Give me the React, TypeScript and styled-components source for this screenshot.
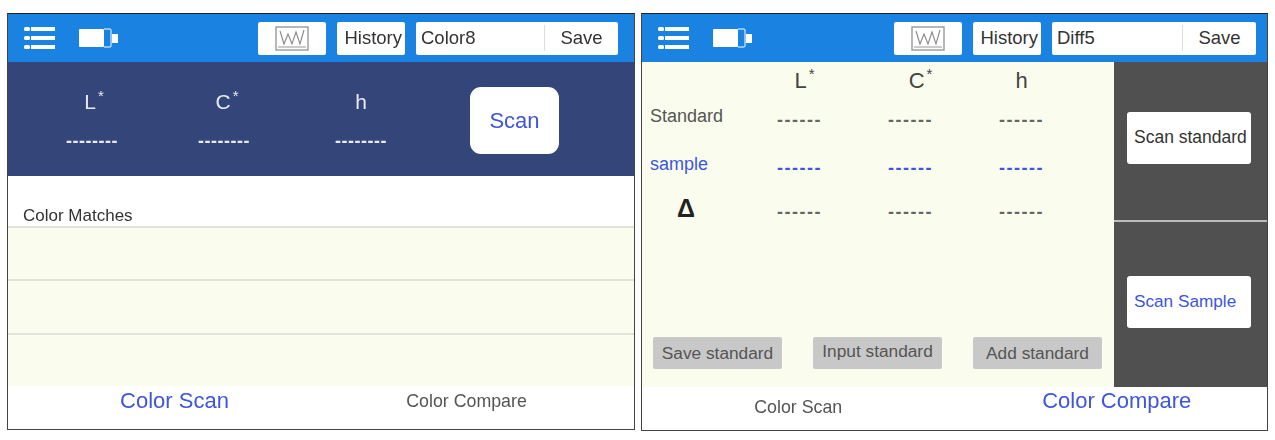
import React from "react";
import styled, { createGlobalStyle } from "styled-components";

const GlobalStyle = createGlobalStyle`
  html, body {
    margin: 0;
    background: #fff;
    font-family: "Liberation Sans", Arial, sans-serif;
  }
`;

const colors = {
  blue: "#1a82e0",
  navy: "#34457a",
  cream: "#fafdee",
  dark: "#505050",
  link: "#3d55e0",
  text: "#444",
};

const Page = styled.div`
  width: 1275px;
  height: 440px;
  box-sizing: border-box;
  padding: 13px 7px 0 7px;
  display: flex;
  gap: 6px;
  filter: blur(0.55px);
`;

const Phone = styled.div<{ $width: number; $height: number }>`
  width: ${(p) => p.$width}px;
  height: ${(p) => p.$height}px;
  box-sizing: border-box;
  border: 1px solid #444;
  border-top-color: #222;
  display: flex;
  flex-direction: column;
  background: #fff;
`;

const Header = styled.header<{ $padRight: number }>`
  height: 48px;
  flex: none;
  background: ${colors.blue};
  display: flex;
  align-items: center;
  padding: 0 ${(p) => p.$padRight}px 0 16px;
`;

const MenuIcon = styled.svg`
  width: 32px;
  height: 24px;
  margin-right: 23px;
`;

const BatteryIcon = styled.svg`
  width: 42px;
  height: 22px;
`;

const HeaderRight = styled.div`
  margin-left: auto;
  display: flex;
  gap: 11px;
`;

const HeaderButton = styled.div`
  width: 68px;
  height: 33px;
  box-sizing: border-box;
  background: #fff;
  border-radius: 2px;
  display: flex;
  align-items: center;
  justify-content: center;
  font-size: 18.5px;
  color: #333;
`;

const HistoryButton = styled(HeaderButton)`
  justify-content: flex-end;
  padding-right: 3px;
`;

const NameField = styled.div<{ $width: number }>`
  width: ${(p) => p.$width}px;
  height: 33px;
  background: #fff;
  border-radius: 2px;
  display: flex;
  align-items: center;
  font-size: 18.5px;
  color: #333;
`;

const NameText = styled.div`
  flex: 1;
  padding-left: 5px;
`;

const SaveText = styled.div`
  width: 73px;
  height: 26px;
  line-height: 26px;
  text-align: center;
  border-left: 1px solid #ddd;
`;

const ChartIcon = styled.svg`
  width: 34px;
  height: 25px;
`;

const ReadoutPanel = styled.section`
  height: 114px;
  flex: none;
  background: ${colors.navy};
  display: grid;
  grid-template-columns: 132px 132px 142px 127px;
  grid-template-rows: 58px 20px;
  padding: 11px 0 0 18px;
  box-sizing: border-box;
  color: #e8e8ee;
`;

const ReadoutHead = styled.div<{ $shift?: number }>`
  justify-self: center;
  align-self: center;
  font-size: 21px;
  transform: translateX(${(p) => p.$shift ?? 0}px);
`;

const ReadoutValue = styled.div`
  justify-self: center;
  align-self: center;
  font-size: 18px;
  font-weight: 700;
  letter-spacing: 0.5px;
  white-space: nowrap;
`;

const Star = styled.sup`
  font-size: 15px;
  line-height: 0;
  margin-left: 2px;
`;

const ScanButton = styled.div`
  grid-column: 4;
  grid-row: 1 / span 2;
  justify-self: end;
  align-self: start;
  margin-top: 14px;
  width: 89px;
  height: 67px;
  border-radius: 11px;
  background: #fff;
  color: ${colors.link};
  font-size: 22px;
  display: flex;
  align-items: center;
  justify-content: center;
`;

const MatchesTitle = styled.div`
  height: 50px;
  flex: none;
  box-sizing: border-box;
  padding: 30px 0 0 15px;
  font-size: 17px;
  line-height: 19px;
  color: #333;
`;

const MatchRow = styled.div`
  flex: 1;
  background: ${colors.cream};
  border-top: 2px solid #e2e4da;
`;

const Tabs = styled.nav`
  height: 43px;
  flex: none;
  display: grid;
  grid-template-columns: 1fr 1fr;
  align-items: center;
  text-align: center;
`;

const Tab = styled.div<{ $active?: boolean; $x: number; $y: number }>`
  color: ${(p) => (p.$active ? colors.link : "#555")};
  font-size: ${(p) => (p.$active ? "22px" : "17.8px")};
  transform: translate(${(p) => p.$x}px, ${(p) => p.$y}px);
`;

const CompareBody = styled.div`
  flex: 1;
  display: flex;
  min-height: 0;
`;

const ComparePanel = styled.section`
  flex: 1;
  background: ${colors.cream};
  display: flex;
  flex-direction: column;
  justify-content: space-between;
  padding-bottom: 18px;
`;

const ValueTable = styled.div`
  display: grid;
  grid-template-columns: 102px 111px 111px 111px;
  grid-template-rows: 37px 38px 58px 30px;
  align-items: center;
  color: #555;
`;

const ColumnHead = styled.div<{ $shift?: number }>`
  font-size: 22px;
  text-align: center;
  color: #444;
  transform: translateX(${(p) => p.$shift ?? 0}px);
`;

const RowLabel = styled.div<{ $sample?: boolean }>`
  font-size: 18px;
  padding: 0 0 4px 8px;
  color: ${(p) => (p.$sample ? colors.link : "#555")};
`;

const DeltaLabel = styled.div`
  font-size: 25px;
  font-weight: 700;
  color: #222;
  padding: 0 0 4px 35px;
`;

const ValueCell = styled.div<{ $sample?: boolean }>`
  font-size: 18px;
  font-weight: 700;
  letter-spacing: 1.5px;
  text-align: center;
  padding-top: 4px;
  color: ${(p) => (p.$sample ? colors.link : "#666")};
`;

const ActionRow = styled.div`
  display: flex;
  gap: 31px;
  padding-left: 11px;
`;

const ActionButton = styled.div<{ $raised?: boolean }>`
  width: 129px;
  height: 32px;
  box-sizing: border-box;
  padding-bottom: ${(p) => (p.$raised ? "4px" : "0")};
  background: #c8c8c8;
  color: #555;
  border-radius: 2px;
  font-size: 17.3px;
  display: flex;
  align-items: center;
  justify-content: center;
`;

const ScanSide = styled.aside`
  width: 153px;
  flex: none;
  display: flex;
  flex-direction: column;
  gap: 2px;
  background: #bbb;
`;

const ScanBlock = styled.div<{ $grow: number }>`
  flex: ${(p) => p.$grow};
  background: ${colors.dark};
  display: flex;
  align-items: center;
  box-sizing: border-box;
  padding: 0 0 6px 13px;
`;

const SideButton = styled.div<{ $sample?: boolean }>`
  width: 124px;
  height: 52px;
  background: #fff;
  border-radius: 3px;
  font-size: ${(p) => (p.$sample ? "17.2px" : "17.5px")};
  line-height: 50px;
  box-sizing: border-box;
  padding-left: 7px;
  white-space: nowrap;
  color: ${(p) => (p.$sample ? colors.link : "#333")};
`;

function TopBar({ name, fieldWidth, padRight }: { name: string; fieldWidth: number; padRight: number }) {
  return (
    <Header $padRight={padRight}>
      <MenuIcon viewBox="0 0 32 24">
        <g fill="#fff">
          <rect x="0" y="1" width="6" height="4" rx="1.5" />
          <rect x="7" y="1" width="24" height="4" />
          <rect x="0" y="10" width="6" height="4" rx="1.5" />
          <rect x="7" y="10" width="24" height="4" />
          <rect x="0" y="19" width="6" height="4" rx="1.5" />
          <rect x="7" y="19" width="24" height="4" />
        </g>
      </MenuIcon>
      <BatteryIcon viewBox="0 0 42 22">
        <rect x="0" y="2" width="25" height="18" rx="1" fill="#fff" />
        <path d="M25 2h6a1 1 0 0 1 1 1v16a1 1 0 0 1-1 1h-6" fill="none" stroke="#fff" strokeWidth="1" />
        <rect x="33" y="7" width="6" height="9" fill="#fff" />
      </BatteryIcon>
      <HeaderRight>
        <HeaderButton>
          <ChartIcon viewBox="0 0 34 25">
            <rect x="1" y="1" width="32" height="23" fill="none" stroke="#999" strokeWidth="1.4" />
            <path d="M3 21h28" stroke="#aaa" strokeWidth="1.2" />
            <path d="M5 5 L9 18 L13 8 L17 18 L21 6 L25 18 L29 4" fill="none" stroke="#888" strokeWidth="1.1" />
          </ChartIcon>
        </HeaderButton>
        <HistoryButton>History</HistoryButton>
        <NameField $width={fieldWidth}>
          <NameText>{name}</NameText>
          <SaveText>Save</SaveText>
        </NameField>
      </HeaderRight>
    </Header>
  );
}

const columns = [1, 2, 3];

export default function App() {
  return (
    <>
      <GlobalStyle />
      <Page>
        <Phone $width={629} $height={417}>
          <TopBar name="Color8" fieldWidth={202} padRight={16} />
          <ReadoutPanel>
            <ReadoutHead $shift={2}>L<Star>*</Star></ReadoutHead>
            <ReadoutHead $shift={3}>C<Star>*</Star></ReadoutHead>
            <ReadoutHead>h</ReadoutHead>
            <ReadoutValue>--------</ReadoutValue>
            <ReadoutValue>--------</ReadoutValue>
            <ReadoutValue>--------</ReadoutValue>
            <ScanButton>Scan</ScanButton>
          </ReadoutPanel>
          <MatchesTitle>Color Matches</MatchesTitle>
          <MatchRow />
          <MatchRow />
          <MatchRow />
          <Tabs>
            <Tab $active $x={10} $y={-6}>Color Scan</Tab>
            <Tab $x={-11} $y={-6}>Color Compare</Tab>
          </Tabs>
        </Phone>
        <Phone $width={628} $height={418}>
          <TopBar name="Diff5" fieldWidth={204} padRight={11} />
          <CompareBody>
            <ComparePanel>
              <ValueTable>
                <span />
                <ColumnHead $shift={5}>L<Star>*</Star></ColumnHead>
                <ColumnHead $shift={10}>C<Star>*</Star></ColumnHead>
                <ColumnHead>h</ColumnHead>
                <RowLabel>Standard</RowLabel>
                {columns.map((c) => <ValueCell key={c}>------</ValueCell>)}
                <RowLabel $sample>sample</RowLabel>
                {columns.map((c) => <ValueCell key={c} $sample>------</ValueCell>)}
                <DeltaLabel>Δ</DeltaLabel>
                {columns.map((c) => <ValueCell key={c}>------</ValueCell>)}
              </ValueTable>
              <ActionRow>
                <ActionButton>Save standard</ActionButton>
                <ActionButton $raised>Input standard</ActionButton>
                <ActionButton>Add standard</ActionButton>
              </ActionRow>
            </ComparePanel>
            <ScanSide>
              <ScanBlock $grow={158}><SideButton>Scan standard</SideButton></ScanBlock>
              <ScanBlock $grow={165}><SideButton $sample>Scan Sample</SideButton></ScanBlock>
            </ScanSide>
          </CompareBody>
          <Tabs>
            <Tab $x={0} $y={-1}>Color Scan</Tab>
            <Tab $active $x={6} $y={-8}>Color Compare</Tab>
          </Tabs>
        </Phone>
      </Page>
    </>
  );
}
